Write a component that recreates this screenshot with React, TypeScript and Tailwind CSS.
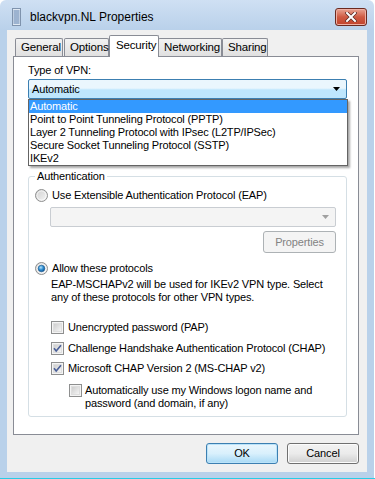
import type { ReactNode } from "react";

const FONT = { fontFamily: '"Liberation Sans", Arial, sans-serif' };

function Radio({ checked }: { checked?: boolean }) {
  return (
    <svg width="13" height="13" viewBox="0 0 13 13" className="shrink-0">
      <defs>
        <linearGradient id="rfill" x1="0" y1="0" x2="1" y2="1">
          <stop offset="0" stopColor="#cfcfcf" />
          <stop offset="1" stopColor="#f6f6f6" />
        </linearGradient>
        <radialGradient id="rdot" cx="0.4" cy="0.35" r="0.7">
          <stop offset="0" stopColor="#b9e3fa" />
          <stop offset="0.5" stopColor="#2f8fd3" />
          <stop offset="1" stopColor="#0c4f8e" />
        </radialGradient>
      </defs>
      <circle cx="6.5" cy="6.5" r="6" fill="url(#rfill)" stroke="#8e8f8f" />
      <circle cx="6.5" cy="6.5" r="4.5" fill="none" stroke="#ffffff" strokeOpacity="0.6" />
      {checked && <circle cx="6.5" cy="6.5" r="3.3" fill="url(#rdot)" stroke="#1a5a92" strokeWidth="0.6" />}
    </svg>
  );
}

function Check({ checked }: { checked?: boolean }) {
  return (
    <svg width="13" height="13" viewBox="0 0 13 13" className="shrink-0">
      <defs>
        <linearGradient id="cfill" x1="0" y1="0" x2="1" y2="1">
          <stop offset="0" stopColor="#cbcbcb" />
          <stop offset="1" stopColor="#f7f7f7" />
        </linearGradient>
      </defs>
      <rect x="0.5" y="0.5" width="12" height="12" fill="#f4f4f4" stroke="#8e8f8f" />
      <rect x="2.5" y="2.5" width="8" height="8" fill="url(#cfill)" stroke="#dedede" />
      {checked && (
        <path d="M3 6.2 L5.2 9 L10 3.2" fill="none" stroke="#4a5f97" strokeWidth="1.6" />
      )}
    </svg>
  );
}

function Tab({ label, w, active }: { label: string; w: number; active?: boolean }) {
  return (
    <div
      style={{ width: w }}
      className={
        active
          ? "relative z-10 -mx-[2px] h-[22px] rounded-t-[2px] border border-b-0 border-[#898c95] bg-white pl-[6px] pt-[3px] text-[11.5px] text-black"
          : "h-[19px] rounded-t-[2px] border border-b-0 border-[#898c95] bg-gradient-to-b from-[#f2f2f2] to-[#dfdfdf] pl-[5px] pt-[2px] text-[11.5px] text-black"
      }
    >
      {label}
    </div>
  );
}

function Btn({ children, focus }: { children: ReactNode; focus?: boolean }) {
  return (
    <div
      className={
        focus
          ? "flex h-[21px] w-[72px] items-center justify-center rounded-[3px] border border-[#3c7fb1] bg-gradient-to-b from-[#eaf6fd] via-[#d9f0fc] to-[#a7d9f5] shadow-[inset_0_0_0_1px_#bbe3f9]"
          : "flex h-[21px] w-[72px] items-center justify-center rounded-[3px] border border-[#707070] bg-gradient-to-b from-[#f2f2f2] via-[#ebebeb] to-[#cfcfcf] shadow-[inset_0_0_0_1px_#fcfcfc]"
      }
    >
      {children}
    </div>
  );
}

function CheckRow({ checked, children, indent }: { checked?: boolean; children: ReactNode; indent?: boolean }) {
  return (
    <div className={indent ? "flex items-start gap-[3px] pl-[40px]" : "flex items-start gap-[4px] pl-[22px]"}>
      <Check checked={checked} />
      <div>{children}</div>
    </div>
  );
}

const VPN_TYPES = [
  "Automatic",
  "Point to Point Tunneling Protocol (PPTP)",
  "Layer 2 Tunneling Protocol with IPsec (L2TP/IPSec)",
  "Secure Socket Tunneling Protocol (SSTP)",
  "IKEv2",
];

export default function App() {
  return (
    <div style={FONT} className="flex h-[479px] w-[375px] flex-col bg-white text-[11px] leading-[13px] tracking-[-0.15px] text-black">
      <div className="flex h-[478px] w-[374px] flex-col rounded-t-[6px] bg-[#b9d1ea] bg-gradient-to-b from-[#cfe0f3] to-[#b9d1ea] to-[30px] px-[7px] pb-[6px]">
        {/* title bar */}
        <div className="flex h-[30px] items-center pt-[4px]">
          <svg width="10" height="18" viewBox="0 0 10 18" className="ml-[5px] mr-[8px]">
            <rect x="0.5" y="0.5" width="8" height="17" fill="#dfe8f2" stroke="#7f93ad" />
            {[3, 5, 7, 9, 11, 13, 15].map((y) => (
              <line key={y} x1="1.5" x2="7.5" y1={y} y2={y} stroke="#5b7fae" />
            ))}
          </svg>
          <span className="text-[12px] tracking-normal text-black">blackvpn.NL Properties</span>
          <div className="ml-auto mt-[-1px] flex h-[18px] w-[32px] items-center justify-center rounded-[3px] border border-[#6b2a20] bg-gradient-to-b from-[#e8a493] via-[#cf5a42] to-[#c1432c] shadow-[inset_0_0_0_1px_#eeb0a4]">
            <svg width="12" height="10" viewBox="0 0 12 10">
              <path d="M2 1 L10 9 M10 1 L2 9" stroke="#5a2a24" strokeWidth="3.4" strokeLinecap="square" />
              <path d="M2 1 L10 9 M10 1 L2 9" stroke="#ffffff" strokeWidth="2" strokeLinecap="square" />
            </svg>
          </div>
        </div>

        {/* client area */}
        <div className="flex flex-1 flex-col bg-[#f0f0f0] pl-[6px] pr-[8px] pt-[5px]">
          <div className="flex h-[22px] items-end pl-[2px]">
            <Tab label="General" w={48} />
            <div className="w-[1px]" />
            <Tab label="Options" w={45} />
            <div className="w-[2px]" />
            <Tab label="Security" w={50} active />
            <div className="w-[1px]" />
            <Tab label="Networking" w={64} />
            <Tab label="Sharing" w={46} />
          </div>

          <div className="-mt-px flex h-[379px] flex-col border border-[#898c95] bg-white pl-[14px] pr-[11px]">
            <div className="mt-[7px]">Type of VPN:</div>

            <div className="relative mt-[2px]">
              <div className="flex h-[20px] items-center rounded-[2px] border border-[#3c7fb1] bg-gradient-to-b from-[#eaf6fd] from-45% to-[#bee6fd] to-55% pl-[3px] pr-[6px]">
                <span>Automatic</span>
                <svg width="7" height="4" viewBox="0 0 7 4" className="ml-auto">
                  <path d="M0 0 H7 L3.5 4 Z" fill="#000" />
                </svg>
              </div>
              <div className="absolute left-0 top-[20px] z-20 w-[320px] border border-[#646464] bg-white shadow-[2px_2px_2px_rgba(0,0,0,0.35)]">
                {VPN_TYPES.map((t, i) => (
                  <div
                    key={t}
                    className={i === 0 ? "h-[13px] bg-[#3399ff] pl-[1px] text-white" : "h-[13px] pl-[1px]"}
                  >
                    {t}
                  </div>
                ))}
              </div>
            </div>

            {/* Authentication group */}
            <div className="relative mt-[77px] flex flex-col rounded-[3px] border border-[#d5dfe5] pb-[6px] pr-[10px]">
              <div className="absolute -top-[7px] left-[6px] bg-white px-[2px]">Authentication</div>

              <div className="mt-[12px] flex items-center gap-[4px] pl-[6px]">
                <Radio />
                <span>Use Extensible Authentication Protocol (EAP)</span>
              </div>

              <div className="ml-[21px] mt-[5px] flex h-[20px] items-center rounded-[2px] border border-[#c9cdd2] bg-[#f4f4f4] pr-[6px]">
                <svg width="7" height="4" viewBox="0 0 7 4" className="ml-auto">
                  <path d="M0 0 H7 L3.5 4 Z" fill="#a0a0a0" />
                </svg>
              </div>

              <div className="mt-[4px] flex justify-end">
                <div className="flex h-[22px] w-[73px] items-center justify-center rounded-[3px] border border-[#adb2b5] bg-[#f4f4f4] text-[#838383]">
                  Properties
                </div>
              </div>

              <div className="mt-[9px] flex items-center gap-[4px] pl-[6px]">
                <Radio checked />
                <span>Allow these protocols</span>
              </div>

              <div className="mt-[3px] pl-[22px]">
                EAP-MSCHAPv2 will be used for IKEv2 VPN type. Select
                <br />
                any of these protocols for other VPN types.
              </div>

              <div className="mt-[17px]">
                <CheckRow>Unencrypted password (PAP)</CheckRow>
              </div>
              <div className="mt-[8px]">
                <CheckRow checked>Challenge Handshake Authentication Protocol (CHAP)</CheckRow>
              </div>
              <div className="mt-[7px]">
                <CheckRow checked>Microsoft CHAP Version 2 (MS-CHAP v2)</CheckRow>
              </div>
              <div className="mt-[9px]">
                <CheckRow indent>
                  Automatically use my Windows logon name and
                  <br />
                  password (and domain, if any)
                </CheckRow>
              </div>
            </div>
          </div>

          <div className="mt-[8px] flex justify-end gap-[9px]">
            <Btn focus>OK</Btn>
            <Btn>Cancel</Btn>
          </div>
        </div>
      </div>
      <div className="h-px w-full bg-[#28cde6]" />
    </div>
  );
}
